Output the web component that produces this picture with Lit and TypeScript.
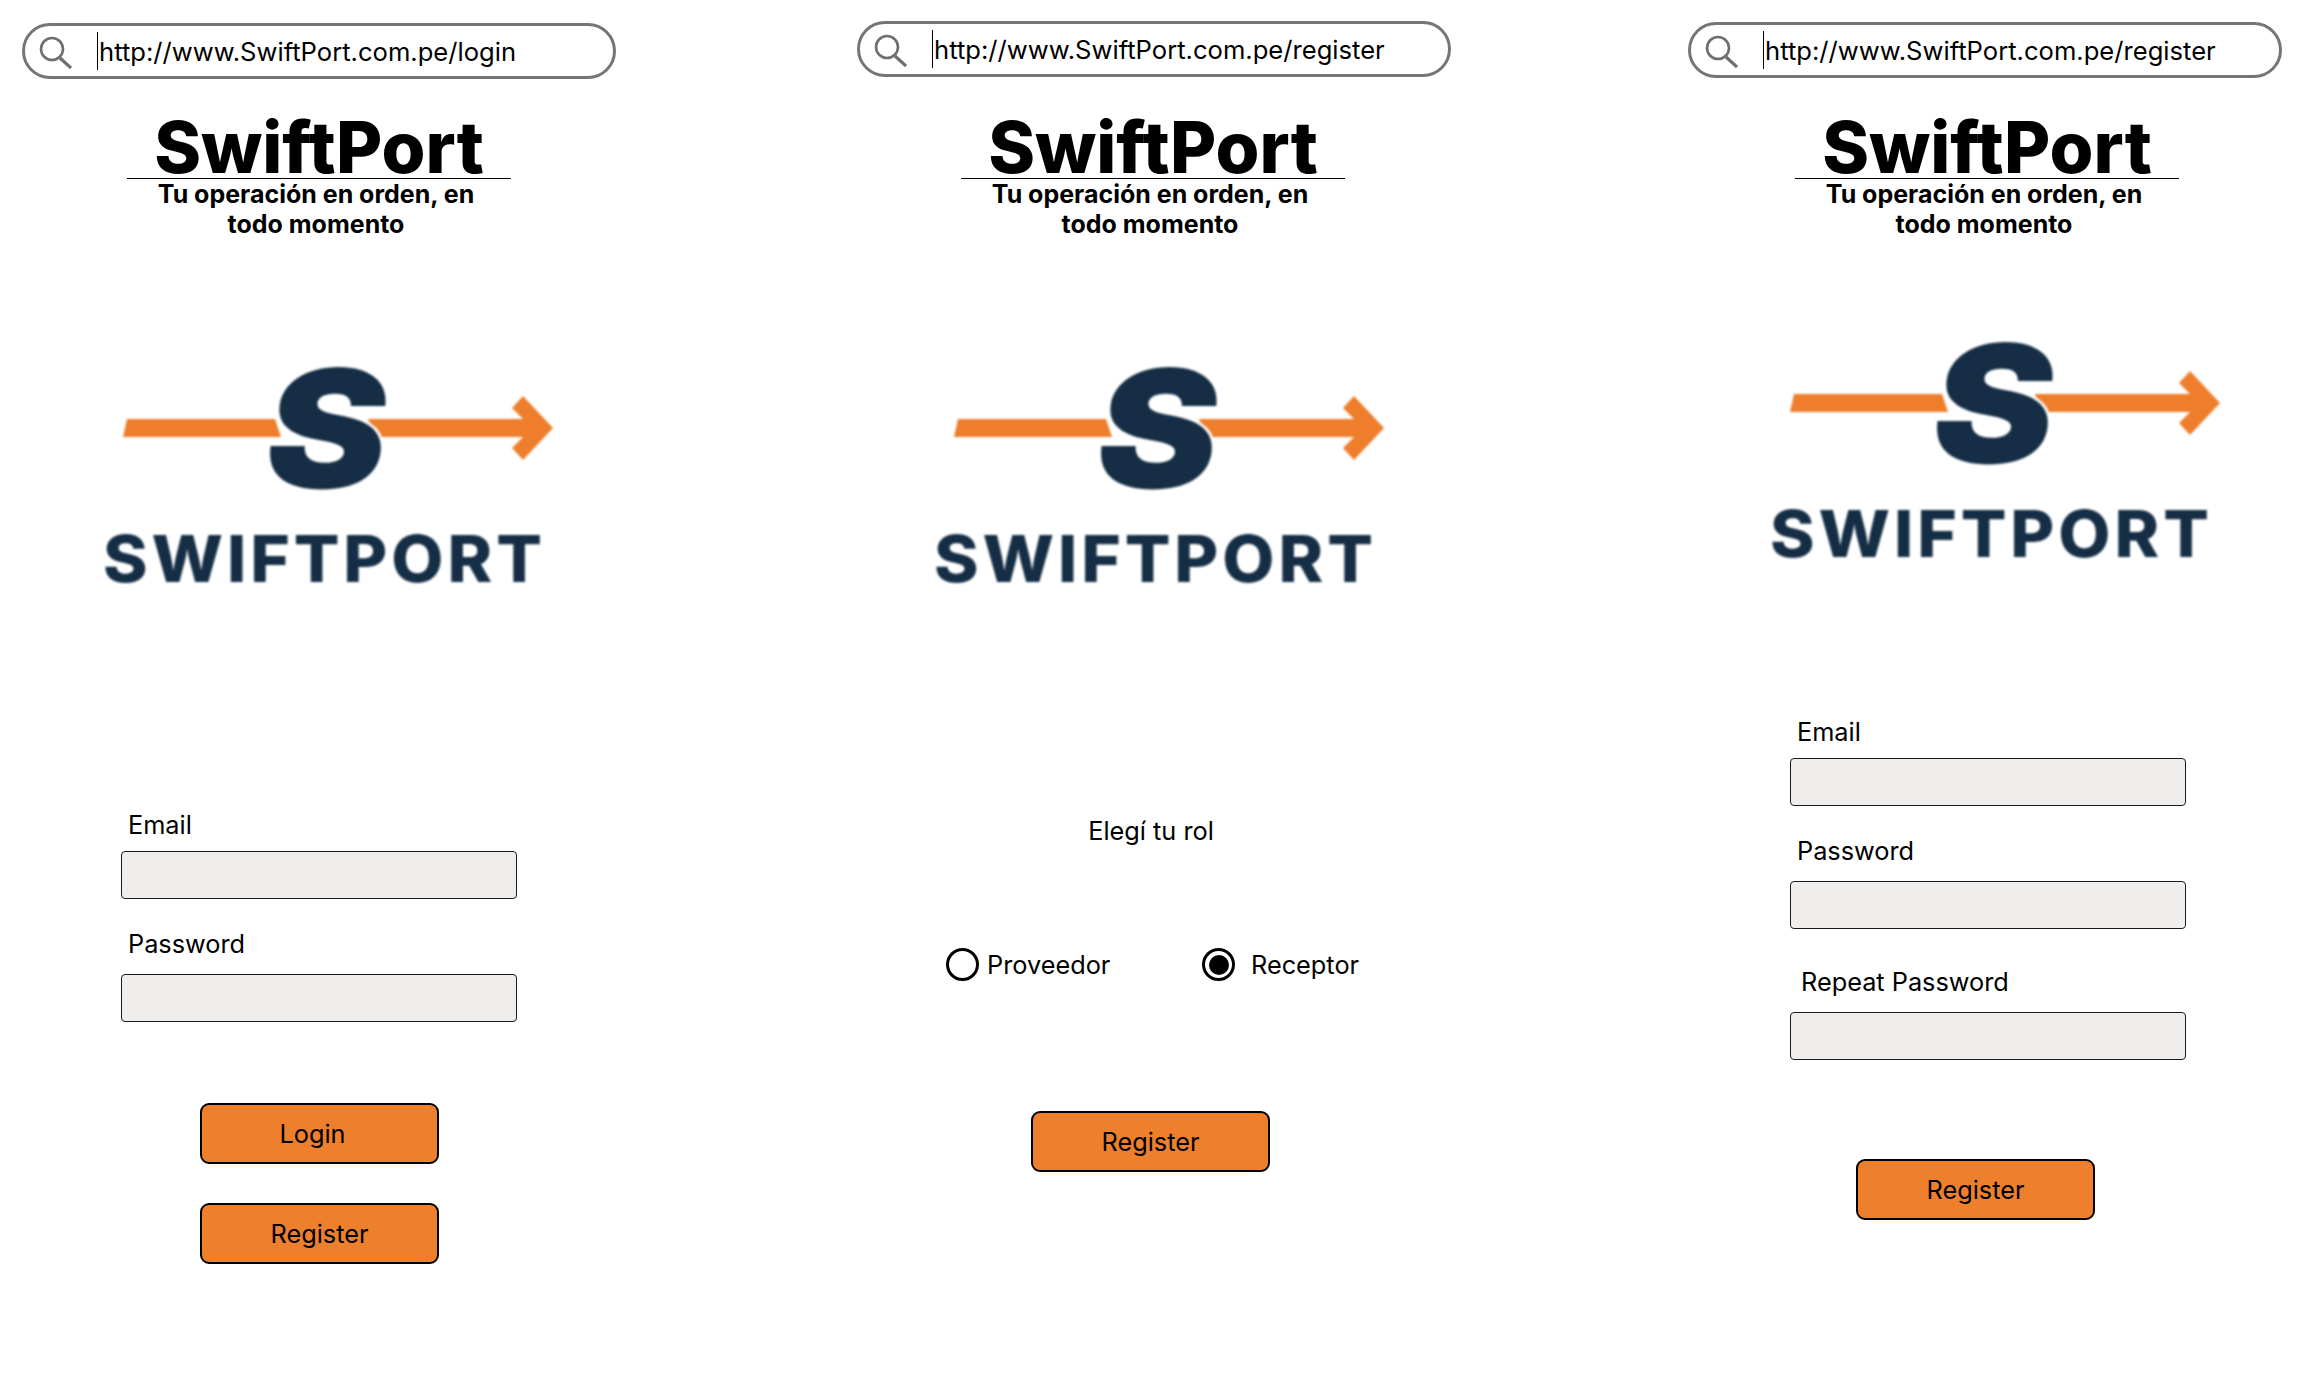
import { LitElement, css, html, svg } from "lit";
import { customElement } from "lit/decorators.js";

const logoMark = svg`
  <polygon fill="#ee7e2b" points="23,87 27,69 175,69 181,87" />
  <polygon fill="#ee7e2b" points="268,69 423,69 412,58 423,46 453,78 423,110 412,98 423,87 274,87" />
  <g transform="translate(220 138) skewX(-8) scale(1.11 1)">
    <text class="mark" text-anchor="middle" x="0" y="0">S</text>
  </g>
  <g transform="translate(3 232) scale(1.04 1)">
    <text class="word" x="0" y="0" textLength="422" lengthAdjust="spacing">SWIFTPORT</text>
  </g>
`;

@customElement("app-root")
export class AppRoot extends LitElement {
  static styles = css`
    :host {
      display: block;
      width: 2307px;
      height: 1385px;
      background: #fff;
      color: #000;
      font-family: Inter, "Liberation Sans", sans-serif;
      overflow: hidden;
    }
    .screens {
      display: grid;
      grid-template-columns: 834px 834px 639px;
    }
    .screen {
      display: flex;
      flex-direction: column;
      align-items: flex-start;
    }

    .bar {
      box-sizing: border-box;
      display: flex;
      align-items: center;
      width: 594px;
      height: 56px;
      margin: 23px 0 25px 22px;
      padding-left: 11px;
      border: 3px solid #757575;
      border-radius: 28px;
    }
    .role .bar { margin: 21px 0 27px 23px; }
    .signup .bar { margin: 22px 0 26px 20px; }
    .bar svg { width: 36px; height: 36px; flex: none; }
    .cursor {
      width: 1px;
      height: 38px;
      margin: 0 1px 0 25px;
      background: #000;
    }
    .url { font-size: 25.6px; white-space: nowrap; }

    .brand { margin-left: 127px; width: 384px; text-align: center; }
    .title {
      height: 61px;
      padding-top: 13px;
      border-bottom: 1px solid #000;
      font-size: 71px;
      font-weight: 800;
      line-height: 60px;
      white-space: nowrap;
    }
    .tagline {
      margin: 0;
      padding-right: 6px;
      font-size: 25px;
      font-weight: 700;
      line-height: 30px;
    }

    .logo {
      display: block;
      width: 460px;
      height: 270px;
      margin: 91px 0 0 100px;
      filter: blur(0.9px);
    }
    .role .logo { margin-left: 97px; }
    .signup .logo { margin: 66px 0 0 99px; }
    .mark {
      fill: #152e45;
      stroke: #fff;
      stroke-width: 5px;
      paint-order: stroke;
      font-size: 164px;
      font-weight: 900;
    }
    .word {
      fill: #152e45;
      font-size: 65px;
      font-weight: 800;
    }

    .label { margin: 30px 0 0 128px; font-size: 25.3px; line-height: 30px; }
    .input {
      box-sizing: border-box;
      width: 396px;
      height: 48px;
      margin: 15px 0 0 121px;
      background: #efeeec;
      border: 1px solid #1a1a1a;
      border-radius: 4px;
    }
    .label.first + .input { margin-top: 11px; }
    .login .label.first { margin-top: 210px; }
    .signup .input { margin-left: 122px; }
    .signup .label { margin-left: 129px; }
    .signup .label.first { margin-top: 142px; }
    .signup .label.repeat { margin: 38px 0 0 133px; }

    .button {
      box-sizing: border-box;
      display: flex;
      align-items: center;
      justify-content: center;
      width: 239px;
      height: 61px;
      margin: 39px 0 0 200px;
      background: #ee802d;
      border: 2px solid #000;
      border-radius: 9px;
      font-size: 25.3px;
    }
    .login .button.first { margin-top: 81px; padding-right: 14px; }
    .role .button { margin: 130px 0 0 197px; }
    .signup .button { margin: 99px 0 0 188px; }

    .prompt {
      width: 634px;
      margin-top: 216px;
      font-size: 25.3px;
      line-height: 30px;
      text-align: center;
    }
    .options {
      display: flex;
      align-items: center;
      margin: 102px 0 0 112px;
      font-size: 25.3px;
    }
    .radio {
      box-sizing: border-box;
      display: flex;
      flex: none;
      align-items: center;
      justify-content: center;
      width: 33px;
      height: 33px;
      border: 3px solid #000;
      border-radius: 50%;
    }
    .radio.on::after {
      content: "";
      width: 20px;
      height: 20px;
      background: #000;
      border-radius: 50%;
    }
    .supplier { width: 215px; margin-left: 8px; }
    .receiver { margin-left: 16px; }
  `;

  private header(url: string) {
    return html`
      <div class="bar">
        <svg viewBox="0 0 36 36" fill="none" stroke="#6e6e6e" stroke-width="2.6">
          <circle cx="16" cy="16" r="11" />
          <path d="M24 25l11 10" stroke-width="3.2" />
        </svg>
        <span class="cursor"></span>
        <span class="url">${url}</span>
      </div>
      <div class="brand">
        <div class="title">SwiftPort</div>
        <p class="tagline">Tu operación en orden, en<br />todo momento</p>
      </div>
      <svg class="logo" viewBox="0 -20 460 270">${logoMark}</svg>
    `;
  }

  render() {
    return html`
      <div class="screens">
        <section class="screen login">
          ${this.header("http://www.SwiftPort.com.pe/login")}
          <div class="label first">Email</div>
          <div class="input"></div>
          <div class="label">Password</div>
          <div class="input"></div>
          <div class="button first">Login</div>
          <div class="button">Register</div>
        </section>

        <section class="screen role">
          ${this.header("http://www.SwiftPort.com.pe/register")}
          <div class="prompt">Elegí tu rol</div>
          <div class="options">
            <span class="radio"></span>
            <span class="supplier">Proveedor</span>
            <span class="radio on"></span>
            <span class="receiver">Receptor</span>
          </div>
          <div class="button">Register</div>
        </section>

        <section class="screen signup">
          ${this.header("http://www.SwiftPort.com.pe/register")}
          <div class="label first">Email</div>
          <div class="input"></div>
          <div class="label">Password</div>
          <div class="input"></div>
          <div class="label repeat">Repeat Password</div>
          <div class="input"></div>
          <div class="button">Register</div>
        </section>
      </div>
    `;
  }
}
